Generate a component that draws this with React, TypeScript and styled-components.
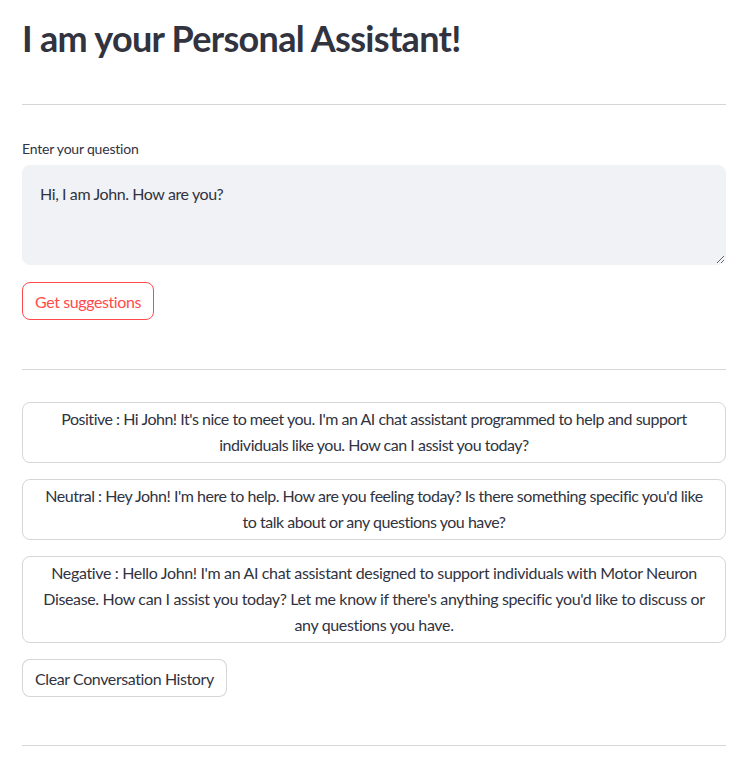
import React from "react";
import styled, { createGlobalStyle } from "styled-components";

const Global = createGlobalStyle`
  html, body { margin: 0; padding: 0; background: #fff; }
  body { font-family: Lato, "Noto Sans", sans-serif; color: rgb(49, 51, 63); letter-spacing: -0.4px; }
  * { box-sizing: border-box; }
`;

const Page = styled.main`
  width: 743px;
  padding: 16px 17px 0 22px;
  display: flex;
  flex-direction: column;
`;

const Title = styled.h1`
  margin: 0;
  font-size: 36px;
  line-height: 44px;
  font-weight: 700;
  letter-spacing: -0.7px;
  color: rgb(49, 51, 63);
`;

const Divider = styled.hr<{ $top: number; $bottom: number }>`
  border: none;
  border-top: 1px solid rgba(49, 51, 63, 0.2);
  margin: ${(p) => p.$top}px 0 ${(p) => p.$bottom}px;
  width: 100%;
`;

const Field = styled.div`
  display: flex;
  flex-direction: column;
  margin-bottom: 17px;
`;

const Label = styled.label`
  font-size: 14px;
  line-height: 20px;
  margin-bottom: 6px;
  display: block;
  letter-spacing: -0.2px;
`;

const TextArea = styled.textarea`
  display: block;
  width: 100%;
  height: 100px;
  background: rgb(240, 242, 246);
  border: 1px solid rgb(240, 242, 246);
  border-radius: 8px;
  padding: 16px 17px;
  font-family: inherit;
  font-size: 16px;
  line-height: 24px;
  letter-spacing: -0.4px;
  color: rgb(49, 51, 63);
  resize: vertical;
  outline: none;
`;

const Button = styled.button<{ $accent?: boolean }>`
  align-self: flex-start;
  height: 38px;
  padding: 0 12px;
  border-radius: 8px;
  background: #fff;
  font-family: inherit;
  font-size: 16px;
  letter-spacing: -0.4px;
  border: 1px solid ${(p) => (p.$accent ? "rgb(255, 75, 75)" : "rgba(49, 51, 63, 0.2)")};
  color: ${(p) => (p.$accent ? "rgb(255, 75, 75)" : "rgb(49, 51, 63)")};
  cursor: pointer;
`;

const Card = styled.div<{ $condensed?: boolean }>`
  border: 1px solid rgba(49, 51, 63, 0.2);
  border-radius: 8px;
  padding: 3px 16px 4px;
  text-align: center;
  font-size: 16px;
  line-height: 26px;
  letter-spacing: ${(p) => (p.$condensed ? "-0.48px" : "-0.35px")};
`;

const Stack = styled.div`
  display: flex;
  flex-direction: column;
  gap: 16px;
`;

const answers = [
  {
    condensed: true,
    text: "Positive : Hi John! It's nice to meet you. I'm an AI chat assistant programmed to help and support individuals like you. How can I assist you today?",
  },
  {
    condensed: true,
    text: "Neutral : Hey John! I'm here to help. How are you feeling today? Is there something specific you'd like to talk about or any questions you have?",
  },
  {
    condensed: false,
    text: "Negative : Hello John! I'm an AI chat assistant designed to support individuals with Motor Neuron Disease. How can I assist you today? Let me know if there's anything specific you'd like to discuss or any questions you have.",
  },
];

export default function App() {
  return (
    <>
      <Global />
      <Page>
        <Title>I am your Personal Assistant!</Title>
        <Divider $top={44} $bottom={34} />
        <Field>
          <Label>Enter your question</Label>
          <TextArea defaultValue="Hi, I am John. How are you?" />
        </Field>
        <Button $accent>Get suggestions</Button>
        <Divider $top={49} $bottom={32} />
        <Stack>
          {answers.map((a, i) => (
            <Card key={i} $condensed={a.condensed}>
              {a.text}
            </Card>
          ))}
          <Button>Clear Conversation History</Button>
        </Stack>
        <Divider $top={48} $bottom={20} />
      </Page>
    </>
  );
}
